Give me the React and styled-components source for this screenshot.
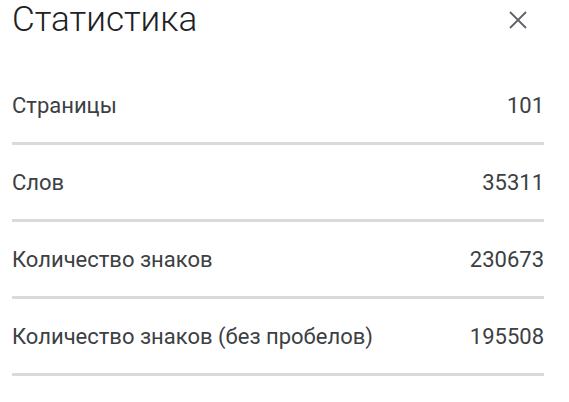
import React from 'react'
import styled, { createGlobalStyle } from 'styled-components'

const GlobalStyle = createGlobalStyle`
  html, body {
    margin: 0;
    padding: 0;
    background: #fff;
  }
  body {
    font-family: Roboto, "Liberation Sans", Arial, sans-serif;
  }
`;

const Dialog = styled.div`
  width: 532px;
  padding: 0 25px 0 12px;
  display: flex;
  flex-direction: column;
`;

const Header = styled.div`
  display: flex;
  justify-content: space-between;
  align-items: center;
  height: 40px;
  margin-bottom: 28px;
`;

const Title = styled.h1`
  margin: 0;
  font-size: 35px;
  line-height: 40px;
  font-weight: 300;
  color: #202124;
`;

const CloseButton = styled.button`
  border: 0;
  background: transparent;
  padding: 0;
  margin-right: 16px;
  width: 20px;
  height: 20px;
  display: flex;
  align-items: center;
  justify-content: center;
  cursor: pointer;
`;

const Row = styled.div`
  display: flex;
  justify-content: space-between;
  align-items: center;
  height: 74px;
  border-bottom: 3px solid #dadada;
  font-size: 22px;
  color: #3c4043;
`;

const Label = styled.span``;

const Value = styled.span`
  text-align: right;
`;

const stats = [
  { label: 'Страницы', value: '101' },
  { label: 'Слов', value: '35311' },
  { label: 'Количество знаков', value: '230673' },
  { label: 'Количество знаков (без пробелов)', value: '195508' },
];

export default function App() {
  return (
    <>
      <GlobalStyle />
      <Dialog>
        <Header>
          <Title>Статистика</Title>
          <CloseButton aria-label="Закрыть">
            <svg width="18" height="18" viewBox="0 0 18 18">
              <path d="M1 1 L17 17 M17 1 L1 17" stroke="#5f6368" strokeWidth="1.8" fill="none" />
            </svg>
          </CloseButton>
        </Header>
        {stats.map((s) => (
          <Row key={s.label}>
            <Label>{s.label}</Label>
            <Value>{s.value}</Value>
          </Row>
        ))}
      </Dialog>
    </>
  )
}
